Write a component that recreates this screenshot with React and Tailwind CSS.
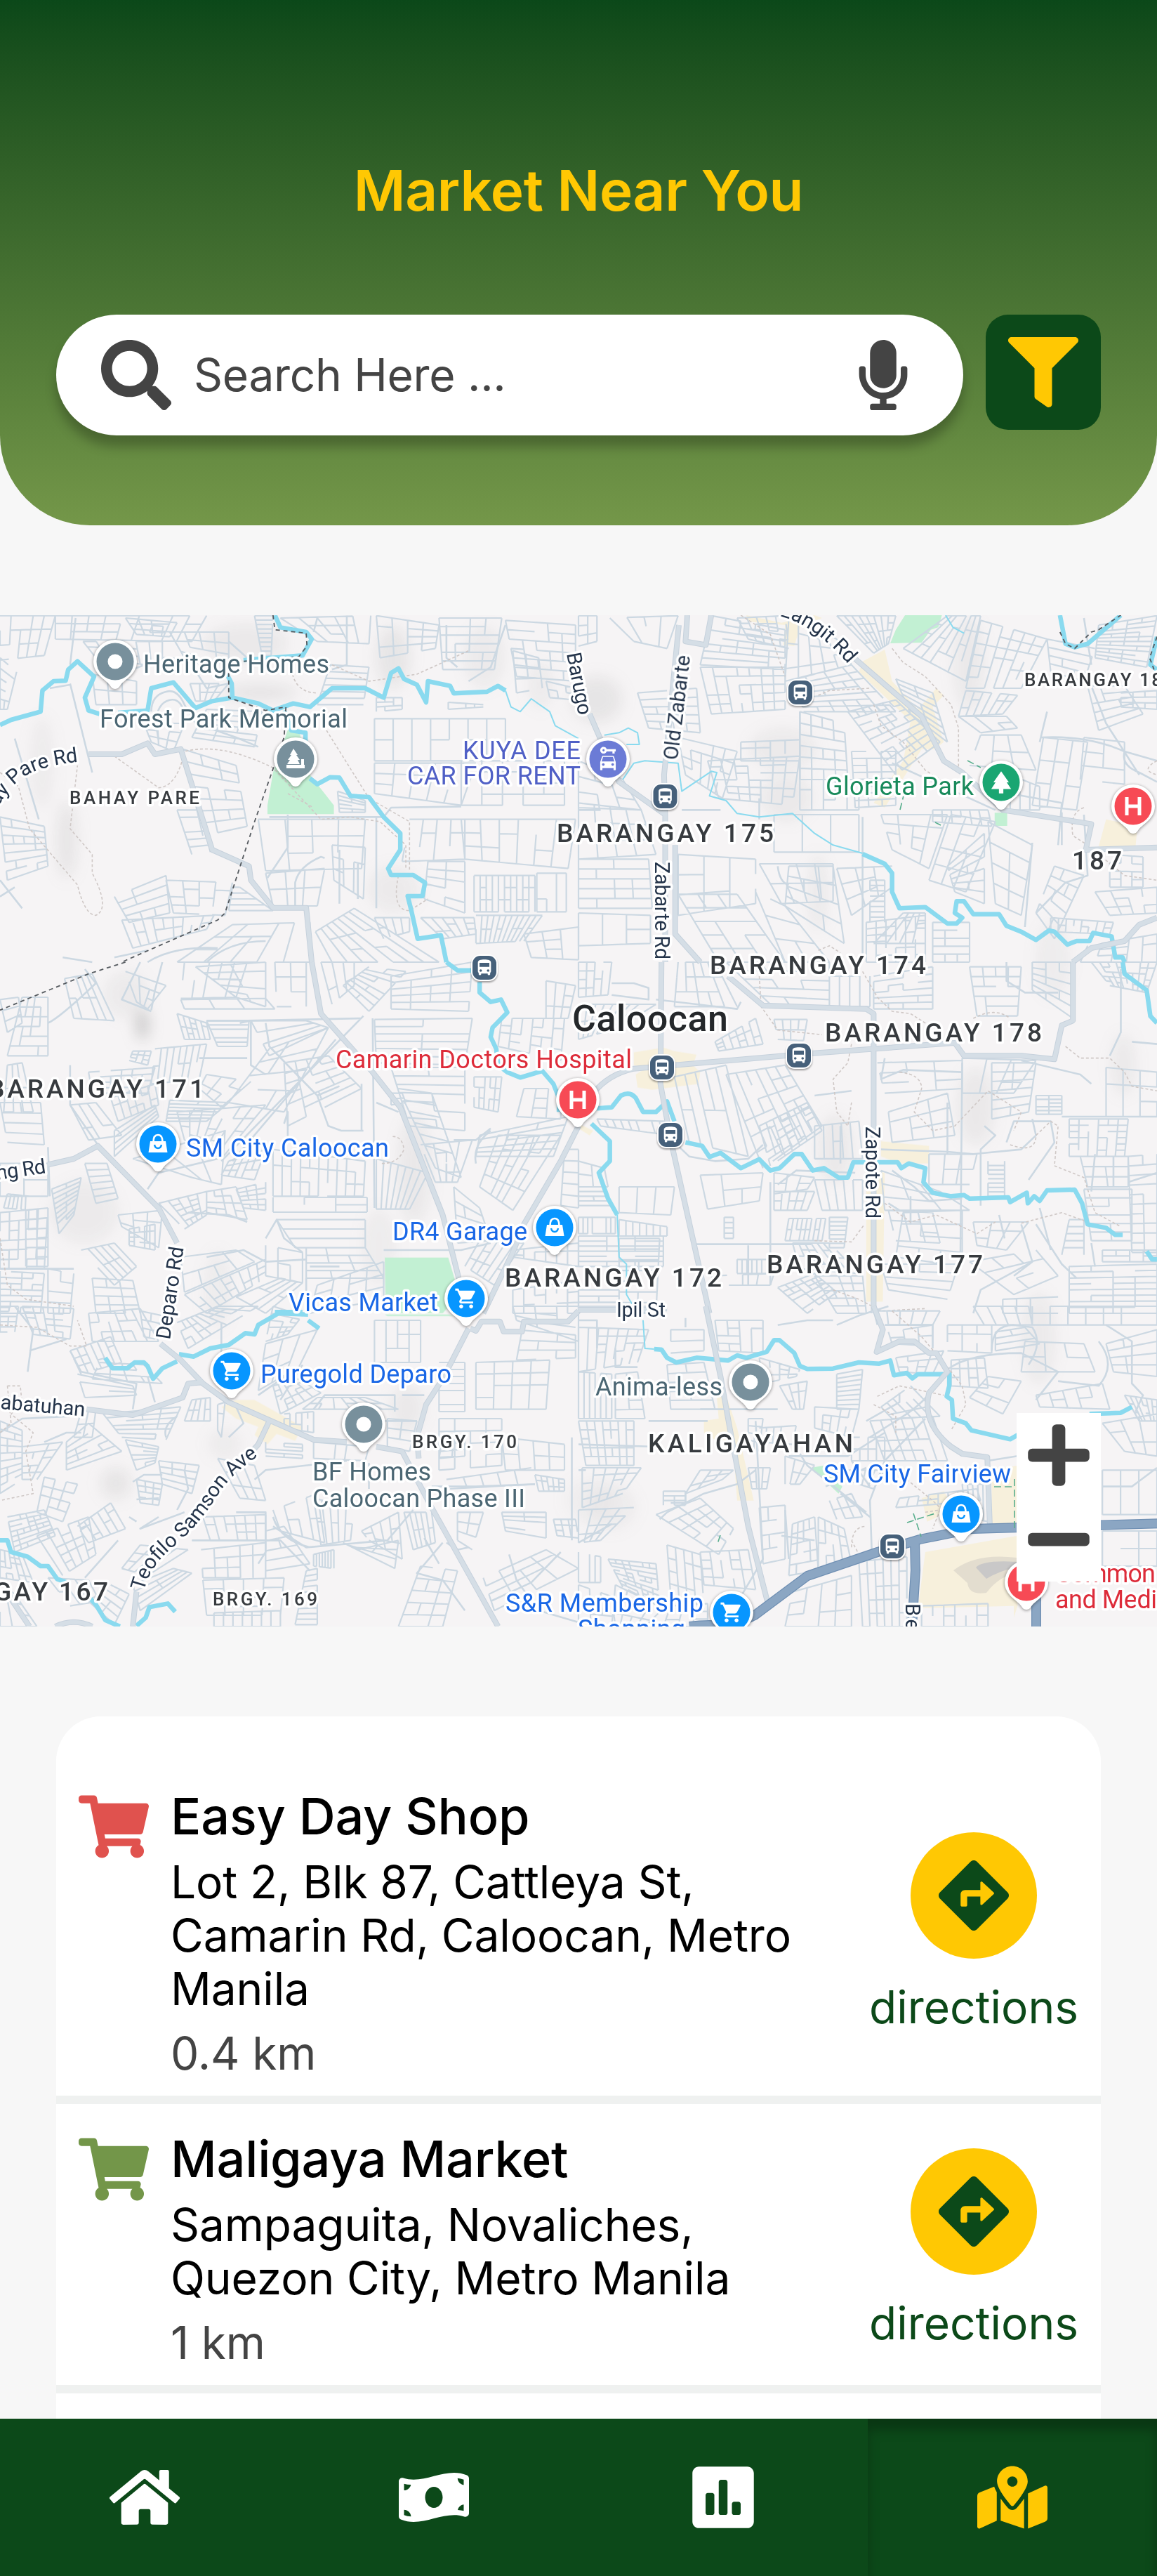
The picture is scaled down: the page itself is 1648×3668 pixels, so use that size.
import React from "react";
import {
  FaSearch,
  FaMicrophone,
  FaFilter,
  FaPlus,
  FaMinus,
  FaShoppingCart,
  FaDirections,
  FaHome,
  FaMoneyBillWave,
  FaPoll,
  FaMapMarkedAlt,
} from "react-icons/fa";
import { MdShoppingCart, MdPark, MdCarRental, MdDirectionsBus } from "react-icons/md";

/* ---------- street fabric ---------- */

const hash = (a, b, c) => {
  const v = Math.sin(a * 12.9898 + b * 78.233 + c * 37.719) * 43758.5453;
  return v - Math.floor(v);
};

// Subdivides a quadrilateral into a street grid, leaving out a few segments.
function gridPath([x1, y1, x2, y2, x3, y3, x4, y4, nu, nv], seed) {
  const at = (u, v) => {
    const x = (1 - v) * ((1 - u) * x1 + u * x2) + v * ((1 - u) * x4 + u * x3);
    const y = (1 - v) * ((1 - u) * y1 + u * y2) + v * ((1 - u) * y4 + u * y3);
    return `${x.toFixed(1)} ${y.toFixed(1)}`;
  };
  const long = nv > nu;
  let d = "";
  for (let i = 0; i <= nu; i++)
    for (let j = 0; j < nv; j++) {
      const drop = i === 0 || i === nu ? 0.05 : long ? 0.45 : 0.1;
      if (hash(i, j, seed) > drop) d += `M${at(i / nu, j / nv)}L${at(i / nu, (j + 1) / nv)}`;
    }
  for (let j = 0; j <= nv; j++)
    for (let i = 0; i < nu; i++) {
      const drop = j === 0 || j === nv ? 0.05 : long ? 0.1 : 0.45;
      if (hash(i + 31, j + 17, seed) > drop) d += `M${at(i / nu, j / nv)}L${at((i + 1) / nu, j / nv)}`;
    }
  return d;
}

const TILES = [
  {
    t: "translate(0 -6) scale(.5255 .33333)",
    blocks: [
      [0,20,150,20,120,190,0,210,5,3],[150,20,560,20,520,130,150,120,9,3],[225,130,440,130,440,240,260,200,6,3],
      [460,90,620,90,620,280,500,200,4,4],[690,20,740,20,735,190,710,190,1,9],[760,30,1005,20,1000,140,860,130,5,3],
      [0,200,45,260,20,420,0,420,2,5],[1020,20,1190,60,1180,160,1030,200,4,4],[1190,30,1360,30,1340,250,1200,250,4,6],
      [1370,40,1560,60,1560,300,1400,280,5,6],[895,230,1000,240,985,400,860,400,1,6],[1015,460,1370,460,1370,640,1015,640,7,2],
      [1015,650,1290,650,1250,830,1015,780,5,3],[1250,640,1530,640,1530,830,1250,830,5,4],[515,310,620,310,580,385,530,385,4,2],
      [560,420,710,430,690,580,520,540,3,6],[390,480,500,480,470,600,410,560,3,3],[495,590,640,660,670,920,550,960,3,7],
      [0,880,120,920,130,1090,20,1150,4,7],[480,850,545,850,570,1030,520,1040,1,6],[700,890,990,890,980,1100,720,1110,4,3],
      [900,1000,990,1010,985,1230,905,1150,3,3],[1110,890,1260,890,1260,1060,1090,1070,4,3],[1250,890,1560,890,1540,1100,1260,1060,6,3],
      [1160,1070,1260,1070,1260,1290,1150,1230,2,5],[1285,1130,1450,1130,1450,1285,1285,1285,10,3],[1455,1120,1535,1120,1535,1285,1455,1285,3,3],
      [310,1220,450,1130,460,1290,350,1330,3,4],[450,1150,630,1160,610,1300,470,1290,4,4],[330,1320,580,1300,560,1360,360,1440,9,2],
      [630,1180,650,1180,740,1280,620,1280,1,4],[720,1120,880,1100,860,1260,740,1260,3,2],[630,1340,840,1330,840,1500,480,1500,5,3],
      [855,1370,960,1270,1190,1500,900,1500,7,3],[1015,1310,1110,1310,1110,1370,1040,1400,4,2],[1140,1310,1285,1310,1290,1380,1200,1400,5,3],
      [1290,1300,1470,1300,1420,1410,1290,1420,11,2],[1420,1380,1568,1350,1568,1490,1440,1480,3,3],[915,770,990,810,990,860,920,860,2,5],
      [1390,170,1460,200,1470,330,1400,350,2,3],[1020,370,1090,370,1090,420,1020,430,3,3],[250,270,370,300,370,400,260,400,3,2],
      [1215,390,1310,400,1310,410,1215,420,4,1],[1480,300,1560,330,1560,380,1490,370,3,2],[340,30,480,50,460,110,370,100,4,3],
    ],
    minor:
      "M190 310L250 690M135 330L190 315M40 545L105 890M620 130L670 200M410 430Q410 360 450 345Q480 330 500 400L530 480L640 540L700 580M430 550Q410 400 460 380Q490 370 500 440M340 290L360 250L440 200L560 210M730 880L1040 880L1060 840L1250 835M0 1150L60 1270M170 1480L250 1500M780 870L780 1010L725 1140M800 1260L800 1160Q810 1090 870 1050L880 1055M920 1020V1250M1020 880L1020 1270M970 1080V1230M310 1480L400 1450M1210 60V200L1240 240M1370 60L1330 240L1270 300M860 30L850 90M940 20V230L900 250M520 230L560 330L620 310M205 30L190 230M0 1220L40 1180M560 1500Q620 1410 720 1410M400 1500Q470 1430 590 1440",
    major: "M240 612H330L400 565L420 612L490 590L575 1020L675 1090L680 1150L740 1268H830L845 1500",
    river:
      "M0 487L30 465L110 430L115 340L145 300L178 298L185 250L210 215L255 280L230 370L240 425L270 440M320 435L400 425L410 330L470 305L530 415L575 385L630 370L628 310L615 270M630 370L700 395L740 425L795 395L840 410L900 330L990 330L1040 370L1060 265L1080 245L1095 290L1130 315L1155 390L1160 300L1220 320L1230 352L1320 345L1350 320L1370 340M745 18L760 70L830 90L845 120L820 190L660 210M770 425L790 510L828 520L828 580M840 715L860 740L895 710L920 712L950 790L1000 795L1040 880L1085 950L1085 1020L1052 1100L1060 1128L1120 1128L1152 1160L1145 1218H1105L1115 1280L1132 1400L1195 1385L1210 1500",
    brook: "M1370 340L1385 410L1410 430L1440 375L1490 430L1505 490L1568 545",
    trail:
      "M310 620L430 755Q480 750 500 600Q600 560 740 670L870 890L950 880L1030 900L1100 1000L1100 1100M885 510L1000 800L1110 900V1110M0 690L50 750L80 930L210 1170Q230 1300 260 1300Q300 1270 250 1120V1040L190 930L210 660M780 780L850 840M790 250Q800 350 860 350M900 230L1000 300L1130 270L1270 170M1080 1130Q1060 1280 1110 1280L1160 1230",
    border: "M740 18L745 80L830 95L832 150L810 195L660 215L620 260L620 370L720 425L775 410L770 540L690 900L610 1290L590 1320L330 1500",
    parks: "M780 508H810L840 700L905 830V868H725V830L740 690Z",
    built: "",
  },
  {
    t: "translate(824 -6) scale(.5255 .33333)",
    blocks: [
      [0,20,50,20,50,130,0,150,2,3],[85,30,270,20,240,160,150,130,4,3],[360,20,560,80,560,250,330,230,5,7],[570,30,700,120,740,230,560,300,5,5],
      [330,240,560,240,560,420,360,440,7,5],[590,290,740,230,860,430,610,430,6,7],[700,20,860,20,840,140,800,180,8,4],[880,160,1000,20,1090,20,1050,300,4,7],
      [1090,40,1270,120,1200,330,1050,330,6,6],[1050,340,1190,360,1150,440,1030,450,6,3],[1410,60,1568,20,1540,240,1400,200,4,10],[730,430,860,380,980,560,860,700,7,9],
      [600,430,720,480,730,720,600,720,4,6],[860,290,960,350,1000,560,900,440,2,7],[740,600,860,600,860,830,750,840,3,8],[440,560,600,550,600,640,440,640,4,3],
      [350,640,600,620,580,830,380,800,7,6],[270,540,430,600,390,800,290,700,5,4],[0,820,170,850,210,1040,0,1060,4,3],[0,640,120,720,170,850,0,840,3,3],
      [600,720,760,720,760,850,600,850,5,3],[530,870,760,870,760,1030,530,1030,3,2],[820,870,1000,870,950,1100,850,1020,4,4],[1010,870,1130,900,1050,1200,950,1150,3,4],
      [0,1060,190,1060,200,1270,0,1270,4,5],[0,1290,195,1300,195,1420,0,1430,3,2],[270,1040,480,1060,480,1250,270,1300,3,3],[270,1210,430,1210,560,1500,380,1500,3,5],
      [490,1080,690,1080,690,1240,550,1250,4,2],[570,1090,690,1090,720,1420,560,1260,3,4],[700,1100,850,1090,850,1180,740,1300,3,3],[790,1150,830,1150,830,1330,790,1330,1,8],
      [780,1330,940,1300,940,1500,780,1500,6,6],[880,1290,940,1290,940,1420,800,1420,4,4],[1000,1090,1100,950,1100,1250,1020,1200,2,6],[1110,900,1230,1000,1200,1300,1130,1250,2,4],
      [1260,540,1380,560,1350,850,1230,830,3,3],[1370,540,1480,560,1480,740,1360,720,2,3],[1170,700,1250,750,1250,850,1170,850,3,2],[960,850,1110,850,1120,920,960,900,6,2],
      [1270,120,1400,160,1370,300,1280,260,3,4],[1380,320,1480,320,1530,440,1410,510,3,5],[1470,350,1568,340,1568,420,1470,410,3,3],[1290,1090,1370,1130,1290,1400,1240,1290,3,5],
      [1280,1310,1450,1330,1440,1380,1280,1370,8,2],[1400,1200,1568,1180,1568,1290,1440,1300,4,3],[1380,1430,1568,1380,1568,1500,1360,1500,5,3],[960,1330,1060,1330,1060,1500,960,1500,3,5],
      [480,1200,560,1260,680,1500,560,1500,2,3],[1440,1040,1530,1050,1530,1180,1440,1180,3,4],[1030,450,1160,450,1190,500,1090,520,3,2],[1090,530,1200,530,1240,680,1060,660,3,2],
      [160,350,320,330,330,520,190,500,4,5],[430,30,560,20,570,160,460,120,5,4],
    ],
    minor:
      "M770 1030V1330M1370 30L1390 230M600 430V720M540 1090Q545 1160 570 1170M1255 540Q1380 530 1480 600L1568 640M1230 990L1210 1350M1310 820L1300 1000M0 850H60M280 850H385M490 800V890M1270 430L1250 560M1390 320L1430 480L1520 700M1480 600Q1470 660 1520 690L1568 730M1100 760L1310 820M850 650L1130 850M1310 860V1000M770 880V1500M1370 870L1380 1130L1320 1160L1240 1290",
    major:
      "M295 18L290 130L345 145L360 18M272 60L232 700L235 870M30 440L110 730L235 870V1500M262 1000L262 1380L330 1500M750 205L930 450L990 640L1040 690L1150 850L1390 910L1375 1020L1568 1010M1340 1500L1390 1440L1480 1410L1520 1340L1568 1310",
    river:
      "M770 1038L830 1080L850 1120L850 1200L870 1270L940 1265L1000 1335H1025L1040 1310L1020 1290L1025 1240H1045L1070 1295L1140 1295L1160 1345L1200 1370L1240 1405L1275 1365L1290 1370L1325 1425L1350 1410L1385 1410L1395 1375L1445 1390L1455 1480L1475 1480L1480 1500M1305 18L1320 140L1345 155L1380 140L1470 18M1568 110L1550 230L1568 250",
    brook:
      "M70 530L110 520L135 500L160 520L165 570H130M120 720L150 650L180 640L270 650L280 770L360 685L375 690L355 790L400 810L430 865L490 880L580 865L640 950L690 1000L770 1035M995 18L1015 70L1045 95",
    trail:
      "M440 18L520 100L560 280M650 360L680 340L790 330M850 160L880 220L940 280L1010 400L1030 500V690M800 400L820 490L880 560L940 680L1000 740M1568 640Q1520 680 1568 700M1370 840Q1330 860 1340 960L1380 1000L1480 1130L1568 1150M650 1450L680 1430L710 1460",
    border: "M1305 90L1320 140L1345 160L1390 90L1410 80L1470 18M1568 110L1548 200L1560 250",
    parks: "M885 18H985L975 70L955 80L930 135L845 138L860 80ZM1128 862H1162V918H1128Z",
    built:
      "M455 18L550 50L640 18L660 30L600 70L585 150L555 145L560 60L460 45ZM770 215L830 165L850 300L920 420L970 330L990 360L960 410L990 560L965 590L930 590L830 840L800 820L880 640L890 560L900 470L760 260ZM1430 890L1515 920L1510 1005H1410Z",
  },
  {
    t: "translate(0 494) scale(.5255 .33333)",
    blocks: [
      [500,0,670,0,640,150,490,155,5,2],[530,20,720,0,720,190,640,150,2,5],[490,160,720,155,745,200,500,200,3,1],[745,0,830,0,830,190,750,190,2,3],
      [60,150,130,150,130,400,20,400,4,6],[175,70,250,50,310,250,200,240,5,2],[340,40,450,100,400,200,370,170,3,3],[560,250,675,250,670,360,590,360,1,6],
      [480,220,560,260,570,330,500,330,5,4],[680,250,830,250,890,280,730,400,2,3],[730,370,890,280,770,640,620,600,3,4],[770,430,890,400,980,540,780,700,4,6],
      [1015,245,1280,240,1260,440,1020,430,2,6],[1060,60,1280,0,1270,210,1060,200,4,5],[930,100,1000,20,1100,40,1000,210,7,2],[870,0,960,0,960,100,900,180,3,3],
      [360,380,410,380,400,440,350,420,3,3],[420,370,560,350,540,500,410,520,8,2],[240,470,420,450,400,560,250,560,6,4],[300,580,420,520,430,610,320,680,6,3],
      [460,590,620,600,560,680,450,680,2,6],[480,640,720,610,600,840,500,760,7,4],[190,610,260,600,330,740,240,760,3,3],[310,720,420,610,430,660,310,830,1,4],
      [0,600,110,600,120,780,20,770,2,4],[20,440,60,430,90,640,10,640,3,2],[360,840,610,720,600,950,520,920,3,1],[620,850,720,800,690,930,600,910,5,3],
      [740,800,990,850,985,1000,740,1000,10,3],[740,1005,995,1005,995,1068,740,1068,3,2],[750,1100,990,1100,990,1220,800,1220,1,3],[830,1220,990,1220,1040,1350,830,1350,3,4],
      [1060,450,1260,450,1260,720,1110,700,2,7],[1080,540,1170,560,1250,920,1180,880,1,7],[1285,490,1360,490,1350,640,1285,620,5,3],[1360,240,1530,240,1520,420,1350,360,6,4],
      [1480,80,1560,100,1540,240,1480,240,3,3],[1420,540,1520,540,1520,670,1400,660,3,3],[1020,840,1160,900,1110,1055,1020,1055,7,1],[1140,780,1280,760,1240,940,1180,940,4,4],
      [1300,740,1540,660,1500,830,1290,830,3,5],[1350,740,1520,740,1390,1060,1300,960,6,4],[1230,960,1300,1050,1330,1190,1240,1200,3,4],[1530,800,1568,800,1568,1050,1520,1040,1,5],
      [140,970,220,920,200,1080,160,1160,2,9],[230,860,290,860,320,1010,260,1030,1,6],[20,990,80,1000,80,1060,10,1050,6,1],[0,1070,130,1050,120,1310,0,1310,5,6],
      [70,1060,130,1050,130,1300,70,1300,2,6],[130,1310,200,1330,190,1500,130,1500,2,4],[0,1320,120,1330,110,1500,0,1500,4,7],[220,1230,310,1200,370,1300,310,1380,5,2],
      [320,1080,440,1060,430,1220,330,1130,3,3],[350,1140,420,1120,420,1230,350,1210,5,4],[430,1030,560,980,560,1080,500,1140,5,5],[560,980,640,960,670,1100,560,1070,4,4],
      [640,970,720,940,720,1060,660,1050,3,5],[250,1350,360,1360,380,1500,260,1500,3,4],[490,1260,640,1230,690,1280,500,1410,4,2],[500,1420,720,1270,720,1350,560,1500,9,3],
      [720,1210,820,1240,820,1370,720,1340,3,2],[640,1430,760,1350,820,1370,720,1500,2,4],[1060,610,1100,600,1090,560,1060,560,1,2],[1300,1190,1420,1200,1340,1380,1260,1300,5,3],
      [1390,1230,1568,1200,1568,1300,1390,1260,6,3],[1390,1400,1568,1360,1568,1500,1390,1500,6,3],[860,1380,1040,1280,1040,1440,840,1500,4,3],
      [0,160,50,150,60,260,20,300,2,3],[0,860,130,860,130,1000,0,1000,2,2],[540,540,600,620,680,510,560,480,3,3],
    ],
    minor:
      "M190 440V610L265 780M440 0L420 120L410 205M130 260Q160 240 260 90L230 30M650 260L680 250L680 440L720 480M720 260L730 360L860 570L890 700L925 720H985M860 570L920 530M980 520V720M1010 240L1015 1050M1020 600L1080 640M130 790L135 1000M560 250H670L980 240M985 230L600 850M910 330L630 850M540 410H670M770 690L780 640V760M400 970L430 900L590 840M510 1070L620 1080L670 1110M720 1180L750 1100L770 1180L820 1240M380 0L330 160L410 210M1210 940V860M1290 860Q1280 780 1330 720M1230 760L1290 760L1330 710M560 1260L660 1230L720 1280L830 1270M1040 1230H1250L1330 1200M840 1300H920M830 1350V1500M0 1310L200 1310",
    major: "M130 865L200 840L265 785L430 1050L480 1200M845 0L870 220L1010 470L1085 620L1200 1080L1245 1360M1568 700L1520 850L1420 1120L1390 1240L1310 1500",
    river: "M1210 0L1240 35H1280M1300 85V130L1330 170L1358 160L1375 215L1335 280L1330 320L1345 370L1350 440L1375 470L1410 493L1470 465L1500 520L1515 580L1515 640M745 1495L820 1495",
    brook: "",
    trail: "M0 1180L20 1380L70 1440L200 1470M1035 860Q1080 860 1095 800Q1090 740 1060 745",
    border: "M340 0L240 50L0 205",
    parks: "M1043 1262H1215L1245 1420L1200 1500H1045Z",
    built: "",
  },
  {
    t: "translate(824 494) scale(.5255 .33333)",
    blocks: [
      [0,0,90,0,80,140,0,150,4,4],[0,180,210,180,110,280,0,330,9,2],[270,0,370,0,430,190,260,190,5,3],[400,0,680,0,680,200,520,180,3,5],
      [680,60,790,60,790,190,680,190,4,1],[800,60,960,20,960,200,800,200,4,6],[530,245,620,245,610,335,540,330,4,2],[370,340,480,240,500,350,380,380,6,3],
      [260,490,400,440,460,830,300,770,5,2],[400,480,560,440,660,700,500,880,6,6],[490,700,620,600,660,720,520,870,7,6],[50,670,240,680,250,740,60,700,9,1],
      [640,700,760,680,770,840,640,840,5,2],[810,430,1040,420,1040,540,830,560,3,3],[840,640,1000,560,1020,740,850,770,3,3],[1040,410,1240,420,1180,560,1040,560,3,3],
      [1060,20,1200,20,1190,230,1080,230,4,5],[1230,0,1340,0,1340,240,1230,120,3,5],[1390,0,1568,0,1540,130,1440,100,8,5],[1120,430,1240,430,1220,640,1120,670,2,6],
      [1240,570,1310,570,1310,650,1240,650,2,5],[1330,670,1490,670,1480,830,1330,830,6,6],[1430,450,1568,470,1568,660,1430,660,3,3],[1110,850,1155,850,1155,1000,1110,1000,1,8],
      [950,820,1080,820,1060,950,950,950,3,2],[1360,830,1490,830,1490,960,1380,960,2,3],[1490,830,1568,820,1568,1240,1500,1240,2,10],[1370,970,1500,970,1500,1190,1390,1190,2,6],
      [1330,1100,1370,1100,1370,1250,1310,1250,1,5],[1420,1230,1568,1230,1568,1280,1420,1280,4,2],[1330,1300,1568,1290,1568,1500,1330,1500,4,8],[1070,1110,1220,1110,1160,1230,1080,1210,3,3],
      [820,890,980,980,1060,1060,830,1060,3,3],[840,1060,960,1070,980,1200,860,1190,3,3],[880,1070,1040,1060,1040,1300,860,1260,3,4],[820,1290,1030,1290,1000,1440,840,1400,2,4],
      [1060,1280,1240,1230,1300,1340,1180,1420,3,3],[1150,1440,1300,1430,1300,1500,1150,1500,4,1],[640,930,770,930,770,1060,660,1060,5,1],[530,980,640,980,620,1060,530,1060,5,2],
      [530,900,640,920,620,970,530,990,3,2],[330,910,500,900,490,1020,350,1055,3,2],[110,960,260,960,250,1080,110,1070,3,1],[0,1090,100,1090,100,1160,0,1160,8,1],
      [110,1100,240,1130,240,1170,110,1170,7,1],[0,1170,230,1170,230,1300,0,1300,3,6],[110,1180,220,1180,210,1500,110,1500,2,7],[0,1400,110,1400,110,1480,0,1480,2,3],
      [570,1095,670,1095,660,1190,560,1190,8,2],[680,1090,730,1090,720,1220,680,1220,1,7],[580,1200,680,1200,760,1330,600,1310,6,4],[430,1270,510,1270,510,1330,430,1330,6,1],
      [540,1390,640,1330,700,1410,620,1500,5,6],[640,1340,770,1340,780,1500,700,1500,4,5],[0,850,70,880,80,960,0,960,2,2],[0,960,70,960,90,1040,0,1040,2,4],
      [360,1340,530,1330,520,1380,370,1380,4,1],[395,1090,420,1090,420,1180,395,1180,1,4],
    ],
    minor:
      "M90 90L150 90L190 110V160L90 140M210 160L430 200L440 170M320 1205H630M520 940V1380M260 770L300 830L370 850L460 840L500 780M1040 430L1035 1290M1000 600V820M820 800L1000 810L1070 820L1200 800L1240 740L1230 670M640 570L740 550M1200 420L1360 480L1390 520M1310 660H1568M1100 700L1130 740L1090 800V1040M1160 770L1180 680L1280 680L1290 770L1220 930M1200 1120L1230 1280L1180 1340M900 1000V1120M840 1030L870 1060M1040 1010L950 1020L910 960L850 890M1140 1080L1155 1180M1250 1050L1280 1230M1350 1350L1310 1290L1240 1120M540 950L590 890L750 900M830 410L820 500L880 460L1040 470M1160 0V80L1210 130L1300 130M640 840H770M710 700V860M1070 1500L1090 1400L1230 1280M460 1210V1380M1400 820L1390 980M1450 830V960M1568 900L1490 940M1390 1200L1400 1300M1568 350L1500 340M1470 30L1470 300L1440 400",
    major:
      "M225 0L222 520L250 760L355 1500M405 60L500 185L780 200L800 220V1500M40 560Q80 480 150 455L630 390L1020 345L1045 400L1200 400L1290 415L1310 270L1340 250V0M0 1480H240",
    river:
      "M50 625L90 620L115 570Q140 550 155 580L175 640L210 640L240 595L260 680M290 770L335 785L355 832L385 815L440 880L490 842L520 890L545 880L585 820H605L635 890L665 880L705 920H730L745 855H865L875 880L895 860L940 880L935 940L960 985L1010 1000L1045 995L1060 1010L1165 1005L1170 1025L1215 985L1218 1030L1235 1000L1250 1020L1270 975L1345 972L1365 1030L1380 1120L1430 1135L1455 1165H1475M35 690L85 765L85 850L55 900L80 1010L105 1080M1475 0L1480 50L1540 120L1550 230L1568 260M1540 1235L1555 1270H1568",
    brook: "M105 1080L110 1260L130 1290L130 1420L145 1460",
    trail:
      "M490 60L495 190L540 290L660 310M770 40L810 150L850 210L900 220L960 280M740 350L730 430L690 500L700 640L730 700L740 600M1070 240Q1130 190 1170 240M1320 360L1360 410H1440L1480 470L1500 530L1568 550M870 470Q930 480 930 540L910 640L960 720L1020 700L1110 550L1200 640L1180 720M1170 780Q1240 820 1240 740L1280 680L1300 700L1290 870L1370 920L1400 1070L1470 1130M830 1030L900 1110L970 1080L1080 1160L1130 1110M640 1190L740 1195L775 1120M1200 1115L1310 1070L1380 1110M690 1400L760 1440L820 1490L940 1480",
    border: "",
    parks: "",
    built:
      "M150 385L230 365L260 380L320 395L310 440L330 470L325 520L200 545L160 535L155 480L180 455L150 440ZM820 765L950 785V860L870 860L820 830ZM780 880L830 900L825 1450H780ZM0 690L40 720L30 740L0 710Z",
  },
  {
    t: "translate(0 984) scale(.5255 .33333)",
    blocks: [
      [0,0,50,0,40,110,0,110,2,5],[60,0,200,10,190,140,90,120,5,5],[240,30,380,10,430,150,250,150,6,3],[190,190,300,130,330,240,220,290,6,3],
      [270,240,390,250,440,330,250,310,4,3],[210,290,360,340,370,380,230,390,2,3],[480,70,590,0,700,0,510,180,9,3],[740,0,820,40,780,120,720,150,4,5],
      [720,160,860,100,810,260,700,360,3,3],[1015,60,1140,60,1140,240,1015,240,4,3],[1190,240,1260,240,1260,450,1190,450,1,7],[1390,0,1568,0,1568,150,1400,60,3,3],
      [1420,60,1560,90,1560,220,1400,230,3,4],[1290,240,1490,230,1480,440,1290,440,4,4],[860,390,990,390,1080,440,820,440,6,2],[770,460,850,450,850,540,770,520,5,3],
      [520,400,570,390,570,490,500,490,4,2],[590,420,610,410,600,560,590,530,1,3],[720,580,820,590,820,650,720,640,2,4],[850,580,1000,600,990,660,850,650,5,1],
      [1050,480,1130,490,1110,620,1050,600,2,3],[1190,480,1360,480,1360,680,1190,700,4,4],[1360,560,1530,590,1530,700,1370,700,4,2],[0,490,60,530,60,740,0,800,3,9],
      [60,600,170,580,100,740,60,740,3,5],[180,580,240,500,330,620,180,700,4,5],[280,460,490,430,450,570,330,560,4,6],[340,570,430,600,420,670,370,700,2,6],
      [430,660,540,680,520,800,440,760,3,4],[370,740,440,760,430,850,380,840,3,4],[590,650,690,680,720,830,650,820,3,3],[120,730,210,760,170,920,100,880,3,4],
      [20,900,120,870,150,980,40,1050,6,7],[100,980,240,900,260,1060,170,1150,5,5],[210,940,300,840,340,950,240,1010,5,4],[330,1120,380,1020,510,1040,400,1150,3,4],
      [0,1040,60,1060,90,1180,0,1160,5,5],[130,1160,240,1170,270,1260,190,1280,3,2],[300,1190,350,1230,310,1360,240,1260,2,4],[550,900,720,890,720,1000,570,1000,6,3],
      [545,1040,720,1010,720,1160,550,1160,5,3],[550,1170,770,1160,760,1320,560,1320,4,4],[720,960,770,940,840,1100,720,1130,2,4],[740,870,860,800,880,1010,760,960,4,2],
      [850,820,960,860,950,1000,870,1020,5,2],[850,1060,905,1040,905,1120,850,1110,7,1],[930,1010,970,1040,1080,1000,1070,1120,3,2],[830,1130,860,1120,860,1360,800,1360,1,10],
      [980,960,1080,880,1090,1080,1000,1000,4,3],[1095,880,1170,880,1180,1010,1120,1040,5,2],[1140,1110,1240,1130,1200,1368,1080,1368,3,5],[1360,880,1480,880,1480,990,1370,960,2,5],
      [1500,910,1560,910,1568,990,1510,980,3,3],[1310,1160,1480,1040,1568,1120,1340,1300,4,4],[1210,740,1440,690,1450,760,1220,780,5,1],[1450,720,1530,740,1530,790,1460,790,5,3],
      [1200,560,1260,550,1260,640,1190,650,2,3],[360,1190,470,1120,520,1140,380,1300,2,4],[580,1310,760,1300,760,1368,580,1368,7,1],[380,20,440,40,420,140,390,130,2,3],
      [0,1180,40,1230,100,1368,0,1368,3,3],[740,340,810,310,870,370,760,460,5,5],[1240,880,1310,880,1280,1040,1240,1000,2,3],[200,560,250,560,260,440,220,450,2,2],
    ],
    minor:
      "M0 540L60 480L190 470M80 190L180 140M40 0L90 100L75 280M190 190L220 280L370 330L360 440M120 580L180 540L220 540M400 300L420 410M640 430L660 500L620 560M690 740L720 700L940 660M740 940L830 1030L1050 1000L1120 870M740 900Q760 1000 840 1030M520 1000L760 1000L840 1130M500 880L380 950L430 900M640 880H720V1050L700 1100M820 250L760 400M1000 670V780M1040 490H1130M1090 380H1150M1210 1010L1240 1040L1270 1030M1200 1010L1130 1140L1200 1170L1260 1300M1170 770L1290 770L1450 760M1380 1060L1400 1170L1460 1300L1568 1350M1520 1050L1440 1180L1330 1260M360 750L390 720H440M370 825L430 820M480 870L510 780L500 700M350 900L370 920M1550 560V1000M1070 450V380H880L850 440M320 1000L230 1160M450 560Q440 510 480 470M1150 990L1190 1100M600 70V200M700 380L810 260",
    major:
      "M435 160L490 230L550 330L620 410L850 570L940 580M1020 600L1090 620L1170 860L1350 1368M550 325L510 330L495 390L360 465L235 440M730 490L700 590L675 635M1270 95L1200 310L1155 420L1130 560L1135 650M1275 95L1290 105L1305 65H1355L1365 108H1415L1420 65H1540L1568 20M370 1220L360 1368M150 1368Q200 1330 250 1368M30 1250L80 1368",
    river:
      "M285 220L305 265L345 265L365 240H390L400 255L415 310L440 265L480 235M485 205L525 215L570 180L620 165L665 115L690 120L700 80L755 30L835 35M835 60L865 95M0 1000H20L30 1050L75 1070L110 1110H130L155 1165L190 1185M240 1240L260 1275L285 1340L325 1368M370 1365L395 1330L405 1285L455 1270L475 1305",
    brook: "",
    trail: "M0 80L100 90L190 170L235 170L210 60M20 340H55L60 420L30 460L90 540L70 620L90 800L0 830M20 340L30 500L0 540",
    border: "",
    parks: "M1043 35H1215L1230 42H1050Z",
    built: "M640 400L690 400L820 515L800 575L750 545L725 590L690 550L700 515L640 480L600 430Z",
  },
  {
    t: "translate(824 984) scale(.5255 .33333)",
    blocks: [
      [0,90,190,100,160,240,0,280,7,5],[250,100,340,100,340,190,250,200,1,2],[0,280,90,290,90,480,0,480,6,1],[100,290,160,280,180,480,100,480,2,5],
      [0,490,150,490,150,680,20,680,7,5],[10,690,170,690,120,800,10,860,5,5],[230,790,290,790,290,850,230,850,2,3],[290,800,390,740,420,700,330,700,3,3],
      [240,250,340,240,370,440,250,440,2,5],[370,60,500,60,500,200,380,190,4,4],[490,220,600,270,590,300,500,330,4,3],[545,340,620,320,610,440,580,440,3,3],
      [700,290,770,270,760,440,700,440,1,8],[860,220,990,190,960,290,870,280,4,3],[840,110,960,80,960,170,850,160,3,2],[800,20,980,20,960,80,810,80,5,1],
      [1000,80,1120,80,1120,200,1000,190,3,3],[1070,0,1220,0,1230,80,1100,80,4,1],[1230,0,1568,0,1568,80,1230,80,7,1],[1130,110,1210,90,1250,160,1130,190,2,3],
      [1210,150,1370,160,1400,280,1200,280,3,2],[1010,230,1100,220,1110,350,1010,340,4,3],[1060,390,1110,300,1200,320,1150,460,3,2],[1240,380,1420,330,1440,440,1250,430,5,2],
      [1430,160,1568,100,1568,300,1450,280,3,4],[1420,500,1568,460,1568,640,1480,620,3,3],[1480,380,1568,400,1568,490,1520,490,6,3],[820,430,900,340,980,470,850,480,5,3],
      [790,490,960,470,1000,660,830,660,6,4],[740,560,830,560,830,660,740,660,4,2],[460,480,500,480,490,620,460,600,2,4],[490,520,590,510,580,590,490,580,5,1],
      [460,690,520,690,510,780,470,780,3,3],[560,640,640,680,600,760,560,760,3,2],[700,700,830,700,800,780,720,740,5,1],[680,830,740,800,770,900,700,910,3,2],
      [870,820,1080,780,1090,830,860,860,8,2],[1040,760,1110,760,1110,920,1050,900,5,3],[0,870,150,860,60,1000,0,1010,4,4],[0,1050,60,1070,60,1180,0,1180,4,1],
      [80,1080,210,1100,220,1280,120,1200,7,8],[210,890,330,820,420,950,380,1060,4,5],[330,1050,460,1040,480,1210,340,1190,5,4],[240,1020,330,1060,340,1280,250,1240,4,4],
      [490,860,560,850,560,1080,500,1100,3,4],[580,930,640,900,650,1130,570,1150,4,5],[650,900,720,950,740,1100,650,1120,4,4],[760,1090,890,1070,890,1368,770,1368,6,5],
      [930,1280,1110,1270,1110,1368,930,1368,6,2],[580,1220,740,1150,740,1368,560,1368,4,3],[1420,960,1568,960,1568,1110,1420,1110,3,2],[1420,700,1568,700,1568,890,1420,890,3,1],
      [250,1280,350,1270,350,1368,230,1368,3,3],[100,1190,230,1290,180,1368,90,1368,4,3],[0,1190,90,1240,100,1368,0,1368,3,3],[640,430,760,440,740,560,640,520,5,3],
    ],
    minor:
      "M220 910L240 880L340 800L430 760L480 700M330 440H540M0 590L210 600M350 490H190M480 490L500 1080L440 1240M540 80L620 60H690M700 80L760 40L840 0M780 490L870 410L870 370M830 80H960V180M1120 190Q1120 80 1180 80L1230 90Q1260 160 1220 250M1000 270Q1060 200 1200 200L1300 280L1240 400M1410 150Q1460 250 1410 340L1300 320M1430 80L1500 150L1500 330L1530 380L1510 450M940 480L830 660L790 830L795 1050M740 660L790 770M710 800L790 900M600 630L620 680L780 880M560 870L570 1080M250 840H290V790M1110 660L1190 640M1420 770H1500L1568 690M670 770L780 690M550 980L640 1000M0 60H50V180M290 50L290 90M100 180V260H160M570 640L730 640L830 540M970 330Q940 410 880 470L790 560M0 1010L90 930M0 700H20",
    major:
      "M345 0L385 300L410 520L460 940L515 1280M800 0L825 100L808 195L870 150H910L950 200H970L1000 280L950 370Q930 500 1010 600L1040 630L1108 645L1115 940M0 15H230",
    river:
      "M205 183L225 185L240 220L265 240L320 220L405 232L430 210L455 220L510 195L530 145L545 145L585 200L600 255L620 268L690 266L760 240L815 245L845 232L855 295L890 285L905 308L920 290L1005 290L1005 340L998 385L1012 400L1015 480L1050 500L1065 530L1170 568L1190 550M1385 460L1470 455L1500 430",
    brook: "M175 60L180 180L205 183",
    trail: "M850 20L930 130L1010 280L1040 340L1050 420L1010 530M810 385L870 340L990 380M800 420L860 470V540M890 740L960 830L980 860M740 1030Q740 940 780 940M740 1000L760 1060L810 1060M940 880L980 870L960 950",
    border: "",
    parks: "M630 690L665 680L715 770L705 800Z",
    built:
      "M375 390L400 380L430 520L475 830L430 830L420 620L340 540V490L380 480ZM930 820L990 790L1005 830L1000 880L945 920ZM1120 700L1190 680V930H1120ZM940 1050L1190 980V1280L1180 1330V1280L920 1290Z",
  },
];

// Shaded relief: x, y, rx, ry, opacity
const HILLS = [
  [95,320,12,50,0.2],[203,583,7,20,0.6],[370,110,45,10,0.22],[560,60,20,40,0.2],[350,40,50,25,0.14],[850,120,30,30,0.2],
  [1115,190,40,26,0.13],[1120,260,30,30,0.14],[1165,395,10,50,0.15],[60,210,14,60,0.1],[560,390,30,30,0.12],[590,790,20,70,0.15],
  [540,900,20,50,0.1],[1190,760,20,45,0.14],[1390,700,22,50,0.15],[1380,70,18,60,0.14],[165,1236,18,20,0.2],[120,850,40,40,0.12],
  [320,1180,20,20,0.1],[310,960,16,50,0.1],[1480,1030,20,60,0.12],[870,1270,30,30,0.1],[1600,640,14,40,0.14],[580,1130,20,30,0.14],
  [200,700,20,40,0.08],[840,1260,30,30,0.07],[180,540,26,30,0.12],[1500,490,20,50,0.1],[690,60,24,40,0.12],[770,100,14,30,0.12],
];

/* ---------- map markers ---------- */

const PINS = [
  [164, 66, "#78909c", "dot"],
  [421, 205, "#78909c", "grove"],
  [866, 205, "#6b7bd6", "car"],
  [1426, 238, "#1aa672", "park"],
  [1614, 272, "#f74a55", "H"],
  [225, 753, "#0796ff", "bag"],
  [823, 690, "#f74a55", "H"],
  [790, 872, "#0796ff", "bag"],
  [664, 973, "#0796ff", "cart"],
  [330, 1076, "#0796ff", "cart"],
  [518, 1152, "#78909c", "dot"],
  [1069, 1092, "#78909c", "dot"],
  [1369, 1280, "#0796ff", "bag"],
  [1042, 1420, "#0796ff", "cart"],
  [1462, 1377, "#f74a55", "H"],
];

function Glyph({ kind }) {
  if (kind === "dot") return <circle r="10.5" fill="#fff" />;
  if (kind === "cart") return <MdShoppingCart size={34} x={-17} y={-17} color="#fff" />;
  if (kind === "park") return <MdPark size={38} x={-19} y={-19} color="#fff" />;
  if (kind === "car") return <MdCarRental size={38} x={-19} y={-19} color="#fff" />;
  if (kind === "H") return <path d="M-9 -13V13M9 -13V13M-9 0H9" stroke="#fff" strokeWidth="5" fill="none" />;
  if (kind === "bag")
    return (
      <g>
        <path d="M-11 -4H11L13.500 12H-13.500Z" fill="#fff" />
        <path d="M-6.500 -3Q-6.500 -13 0 -13T6.500 -3" fill="none" stroke="#fff" strokeWidth="2.6" />
        <path d="M-5 1Q-4 6 0 6T5 1" fill="none" stroke="#0796ff" strokeWidth="2.4" />
      </g>
    );
  return (
    <g fill="#fff">
      <path d="M-3 -15L3 -6H1L6 1H3L6 7H-12L-8 1H-11L-6 -6H-8Z" />
      <path d="M-13 8H13V13H-13ZM8 0H12V8H8Z" />
    </g>
  );
}

function Pin({ x, y, color, kind }) {
  return (
    <g transform={`translate(${x} ${y})`}>
      <path
        d="M0 39C-4 39 -6 36 -8 33C-13 26 -31 18 -31 0A31 31 0 0 1 31 0C31 18 13 26 8 33C6 36 4 39 0 39Z"
        fill="#fff"
        className="drop-shadow-[0_1px_2px_rgba(0,0,0,0.45)]"
      />
      <circle r="26.500" fill={color} />
      <Glyph kind={kind} />
    </g>
  );
}

const STOPS = [[1140,110],[947.5,258],[690,502],[943,644],[1138,627],[955,740],[1271,1326]];

/* ---------- map labels: text, x, baseline, width, style ---------- */

const GRAY = "#4b6673";
const BLUE = "#1967e6";
const RED = "#dd2c3a";
const LABELS = [
  ["Heritage Homes", 204, 82, 265, GRAY],
  ["Forest Park Memorial", 142, 160, 353, GRAY],
  ["KUYA DEE", 659, 205, 168, "#5060c6"],
  ["CAR FOR RENT", 580, 241, 247, "#5060c6"],
  ["Glorieta Park", 1176, 256, 211, "#198a5b"],
  ["Camarin Doctors Hospital", 478, 645, 422, RED],
  ["SM City Caloocan", 265, 771, 289, BLUE],
  ["DR4 Garage", 559, 890, 192, BLUE],
  ["Vicas Market", 411, 991, 213, BLUE],
  ["Puregold Deparo", 371, 1093, 272, BLUE],
  ["Anima-less", 848, 1111, 181, GRAY],
  ["BF Homes", 445, 1232, 169, GRAY],
  ["Caloocan Phase III", 445, 1270, 303, GRAY],
  ["SM City Fairview", 1173, 1235, 267, BLUE],
  ["S&R Membership", 720, 1419, 282, BLUE],
  ["Shopping", 823, 1456, 153, BLUE],
  ["Common", 1503, 1377, 143, RED],
  ["and Medi", 1503, 1414, 145, RED],
];
const AREAS = [
  ["BARANGAY 175", 793, 323, 309, 37],
  ["BARANGAY 174", 1011, 511, 308, 37],
  ["BARANGAY 178", 1175, 607, 309, 37],
  ["BARANGAY 171", -17, 687, 308, 37],
  ["BARANGAY 172", 719, 956, 309, 37],
  ["BARANGAY 177", 1092, 937, 308, 37],
  ["KALIGAYAHAN", 923, 1192, 292, 37],
  ["187", 1527, 362, 71, 37],
  ["GAY 167", -9, 1403, 163, 37],
  ["BAHAY PARE", 99, 269, 185, 26],
  ["BARANGAY 18", 1459, 101, 196, 26],
  ["BRGY. 170", 587, 1186, 149, 26],
  ["BRGY. 169", 303, 1410, 149, 26],
];
const ROADS = [
  ["Zabarte Rd", 933, 351, 139, 90],
  ["Zapote Rd", 1233, 728, 131, 90],
  ["Old Zabarte", 965, 207, 150, -83],
  ["Barugo", 807, 55, 90, 79],
  ["ng Rd", -4, 804, 71, -8],
  ["Ipil St", 878, 999, 70, 0],
  ["abatuhan", 0, 1130, 121, 5],
  ["Deparo Rd", 242, 1032, 133, -81.5],
  ["Be", 1290, 1407, 38, 90],
];
const CURVED = [
  ["hay Pare Rd", "road-hay-pare", "M-10 286C14 240 34 226 62 218S100 211 130 206"],
  ["Teofilo Samson Ave", "road-teofilo", "M205 1390Q212 1356 246 1327Q280 1300 308 1256Q330 1222 364 1200"],
  ["Langit Rd", "road-langit", "M1110 1Q1162 14 1210 72"],
];

function MapView() {
  return (
    <svg
      viewBox="0 0 1648 1440"
      className="block h-full w-full bg-[#f6f4f5] font-['Roboto',sans-serif]"
      role="img"
      aria-label="Map of Caloocan"
    >
      <defs>
        <filter id="soft" x="-100%" y="-100%" width="300%" height="300%">
          <feGaussianBlur stdDeviation="10" />
        </filter>
        {CURVED.map(([, id, d]) => (
          <path key={id} id={id} d={d} />
        ))}
      </defs>

      <g filter="url(#soft)" fill="#a8a8a8">
        {HILLS.map(([x, y, rx, ry, o], i) => (
          <ellipse key={i} cx={x} cy={y} rx={rx * 1.2} ry={ry * 1.1} opacity={o} />
        ))}
      </g>

      {TILES.map((tile, i) => (
        <g key={`g${i}`} transform={tile.t}>
          {tile.built && <path d={tile.built} fill="#f7f0dc" />}
          {tile.parks && <path d={tile.parks} fill="#c2f0d3" />}
        </g>
      ))}
      <path d="M1358 1360Q1390 1335 1448 1342V1366Q1425 1366 1405 1392Q1380 1396 1378 1378Z" fill="#e3ddcf" />
      <path d="M1390 1356Q1400 1345 1448 1348V1356Q1425 1360 1405 1372Z" fill="#c9c8c8" />

      {TILES.map((tile, i) => (
        <g key={`s${i}`} transform={tile.t} fill="none" strokeLinejoin="round">
          <path
            d={tile.blocks.map((b, j) => gridPath(b, i * 100 + j)).join("")}
            stroke="#ccd8e2"
            strokeWidth="2.2"
            vectorEffect="non-scaling-stroke"
          />
          <path d={tile.minor} stroke="#ccd8e2" strokeWidth="2.6" vectorEffect="non-scaling-stroke" />
          <path d={tile.trail} stroke="#cfc8c6" strokeWidth="1.6" strokeDasharray="4 3" vectorEffect="non-scaling-stroke" />
        </g>
      ))}

      {TILES.map((tile, i) => (
        <g key={`r${i}`} transform={tile.t} fill="none" strokeLinejoin="round">
          <path d={tile.river} stroke="#8adaef" strokeWidth="6.500" vectorEffect="non-scaling-stroke" />
          <path d={tile.brook} stroke="#8adaef" strokeWidth="2" vectorEffect="non-scaling-stroke" />
          <path d={tile.major} stroke="#c6d1dc" strokeWidth="8" vectorEffect="non-scaling-stroke" />
          <path d={tile.major} stroke="#d5dee6" strokeWidth="6" vectorEffect="non-scaling-stroke" />
          <path d={tile.border} stroke="#565b60" strokeWidth="1.8" strokeDasharray="6 5" vectorEffect="non-scaling-stroke" />
        </g>
      ))}

      <g fill="none" strokeLinejoin="round">
        <path d="M982 1440Q1010 1436 1040 1440L1075 1424L1150 1368L1250 1334L1310 1316L1385 1301L1660 1293M1303 1320L1304 1360L1299 1440M1476 1395V1440" stroke="#6f8fb3" strokeWidth="14" />
        <path d="M982 1440Q1010 1436 1040 1440L1075 1424L1150 1368L1250 1334L1310 1316L1385 1301L1660 1293M1303 1320L1304 1360L1299 1440M1476 1395V1440" stroke="#8ba6c3" strokeWidth="11.500" />
        <path d="M1292 1292L1335 1278M1301 1279L1312 1312M1445 1230V1300M1416 1241H1444M1378 207L1397 217M1282 277L1290 245M1332 295L1340 299M1026 1310L1022 1322" stroke="#58ae8d" strokeWidth="1.6" strokeDasharray="10 5" />
      </g>

      <g stroke="#fff" strokeWidth="7" strokeLinejoin="round" className="[paint-order:stroke]">
        {ROADS.map(([text, x, y, w, a]) => (
          <text key={text} transform={`translate(${x} ${y}) rotate(${a})`} fontSize="29" textLength={w} fill="#24344a">
            {text}
          </text>
        ))}
        {CURVED.map(([text, id]) => (
          <text key={id} fontSize="29" fill="#24344a">
            <textPath href={`#${id}`}>{text}</textPath>
          </text>
        ))}
        {AREAS.map(([text, x, y, w, s]) => (
          <text key={text} x={x} y={y} fontSize={s} fontWeight="500" textLength={w} fill="#373b3f">
            {text}
          </text>
        ))}
        {LABELS.map(([text, x, y, w, c]) => (
          <text key={text} x={x} y={y} fontSize="36" textLength={w} fill={c}>
            {text}
          </text>
        ))}
        <text x="815" y="592" fontSize="52" fontWeight="500" textLength="222" fill="#25282b">
          Caloocan
        </text>
      </g>

      {STOPS.map(([x, y]) => (
        <g key={`${x}-${y}`} transform={`translate(${x} ${y})`}>
          <rect x="-19" y="-19" width="38" height="38" rx="13" fill="#fff" className="drop-shadow-[0_2px_1px_rgba(0,0,0,0.35)]" />
          <rect x="-17" y="-17" width="34" height="34" rx="11" fill="#46607a" />
          <MdDirectionsBus size={28} x={-14} y={-14} color="#fff" />
        </g>
      ))}
      {PINS.map(([x, y, color, kind]) => (
        <Pin key={`${x}-${y}`} x={x} y={y} color={color} kind={kind} />
      ))}
    </svg>
  );
}

/* ---------- page ---------- */

const SHOPS = [
  {
    name: "Easy Day Shop",
    lines: ["Lot 2, Blk 87, Cattleya St,", "Camarin Rd, Caloocan, Metro", "Manila"],
    distance: "0.4 km",
    tint: "text-[#e0524e]",
  },
  {
    name: "Maligaya Market",
    lines: ["Sampaguita, Novaliches,", "Quezon City, Metro Manila"],
    distance: "1 km",
    tint: "text-[#739649]",
  },
];

function ShopRow({ shop }) {
  return (
    <li className="flex items-center justify-between border-b-[12px] border-[#eff1f0] px-8 pt-[34px] pb-[22px]">
      <div className="flex items-start gap-[31px]">
        <FaShoppingCart className={`mt-[9px] size-[100px] shrink-0 ${shop.tint}`} />
        <div className="text-[64px] leading-[76px] tracking-[-0.1px] whitespace-nowrap text-black">
          <h2 className="text-[72px] leading-[88px] font-medium tracking-[-0.2px]">{shop.name}</h2>
          <p className="mt-3">
            {shop.lines.map((line) => (
              <span key={line} className="block">{line}</span>
            ))}
          </p>
          <p className="mt-4 text-[#444444]">{shop.distance}</p>
        </div>
      </div>
      <button type="button" className="flex flex-col items-center gap-[31px] text-[64px] leading-[76px] text-[#0c4919]">
        <span className="flex size-[180px] items-center justify-center rounded-full bg-[#ffc803]">
          <FaDirections className="size-[100px]" />
        </span>
        directions
      </button>
    </li>
  );
}

const TABS = [
  { label: "Home", Icon: FaHome },
  { label: "Prices", Icon: FaMoneyBillWave },
  { label: "Reports", Icon: FaPoll },
  { label: "Map", Icon: FaMapMarkedAlt, active: true },
];

export default function App() {
  return (
    <div className="flex h-[3668px] w-[1648px] flex-col overflow-hidden bg-[#f7f7f7] font-['Inter',sans-serif]">
      <header className="flex h-[748px] shrink-0 flex-col rounded-b-[128px] bg-linear-to-b from-[#0b4819] to-[#749749] px-20 pt-[222px]">
        <h1 className="text-center text-[80px] leading-[97px] font-semibold tracking-[-0.35px] text-[#ffc803]">Market Near You</h1>
        <div className="mt-[129px] flex items-start gap-8">
          <label className="flex h-[172px] flex-1 items-center rounded-full bg-white px-16 text-[#444444] shadow-[0_16px_16px_rgba(0,0,0,0.25)]">
            <FaSearch className="size-[100px]" />
            <span className="ml-8 flex-1 text-[64px] leading-[78px] tracking-[-0.3px]">Search Here ...</span>
            <FaMicrophone className="size-[100px]" />
          </label>
          <button type="button" className="flex size-[164px] items-center justify-center rounded-[32px] bg-[#0c4919] text-[#ffc803]">
            <FaFilter className="size-[100px]" />
          </button>
        </div>
      </header>

      <section className="relative mt-32 h-[1440px] shrink-0 overflow-hidden">
        <MapView />
        <div className="absolute right-20 bottom-16 flex w-[120px] flex-col bg-white text-[#444444]">
          <button type="button" className="flex size-[120px] items-center justify-center">
            <FaPlus className="size-[100px]" />
          </button>
          <button type="button" className="flex size-[120px] items-center justify-center">
            <FaMinus className="size-[100px]" />
          </button>
        </div>
      </section>

      <main className="mx-20 mt-32 min-h-0 flex-1 overflow-hidden rounded-t-[64px] bg-white pt-16">
        <ul>
          {SHOPS.map((shop) => (
            <ShopRow key={shop.name} shop={shop} />
          ))}
        </ul>
      </main>

      <nav className="grid h-[224px] shrink-0 grid-cols-4 bg-[#0c4919] text-white">
        {TABS.map(({ label, Icon, active }) => (
          <a
            key={label}
            aria-label={label}
            className={
              active
                ? "flex items-center justify-center text-[#ffc803] shadow-[inset_0_16px_16px_rgba(0,0,0,0.25)]"
                : "flex items-center justify-center"
            }
          >
            <Icon className="size-[100px]" />
          </a>
        ))}
      </nav>
    </div>
  );
}
